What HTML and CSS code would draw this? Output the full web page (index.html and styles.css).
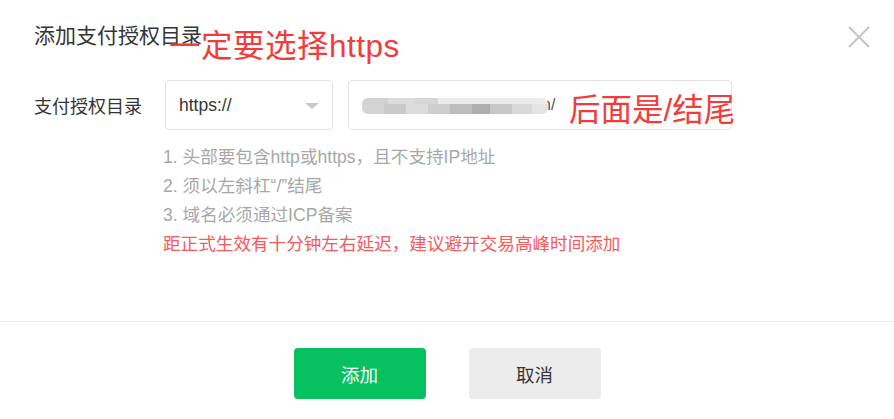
FILE: index.html
```html
<!DOCTYPE html>
<html lang="zh-CN">

<head>
    <meta charset="UTF-8">
    <title>添加支付授权目录</title>
    <link rel="stylesheet" href="styles.css">
</head>

<body>
    <div class="dialog">
        <div class="dialog-head">
            <h3 class="dialog-title">添加支付授权目录</h3>
            <button class="close-btn" aria-label="关闭">
                <svg width="22" height="22" viewBox="0 0 22 22">
                    <path d="M1 1 L21 21 M21 1 L1 21" stroke="#c6c6c6" stroke-width="2.2" fill="none" />
                </svg>
            </button>
        </div>

        <div class="dialog-body">
            <div class="form-row">
                <label class="form-label">支付授权目录</label>
                <div class="select">
                    <span>https://</span>
                    <i class="select-arrow"></i>
                </div>
                <div class="input">
                    <span class="mosaic"></span>
                    <span class="input-tail">n/</span>
                </div>
            </div>

            <ul class="tips">
                <li>1. 头部要包含http或https，且不支持IP地址</li>
                <li>2. 须以左斜杠“/”结尾</li>
                <li>3. 域名必须通过ICP备案</li>
                <li class="warn">距正式生效有十分钟左右延迟，建议避开交易高峰时间添加</li>
            </ul>
        </div>

        <div class="dialog-foot">
            <button class="btn btn-primary">添加</button>
            <button class="btn btn-default">取消</button>
        </div>

        <!-- screenshot annotations -->
        <span class="note note-https">一定要选择https</span>
        <span class="note note-slash">后面是/结尾</span>
    </div>
</body>

</html>
```

FILE: styles.css
```css
body {
    margin: 0;
    background: #fff;
    font-family: "Liberation Sans", "Noto Sans CJK SC", sans-serif;
    color: #353535;
}

.dialog {
    position: relative;
    width: 894px;
    height: 419px;
    background: #fff;
}

.dialog-head {
    display: flex;
    justify-content: space-between;
    align-items: flex-start;
    padding: 22px 24px 0 34px;
    height: 58px;
    box-sizing: border-box;
}

.dialog-title {
    margin: 0;
    font-size: 21px;
    font-weight: normal;
    line-height: 28px;
    color: #353535;
}

.close-btn {
    background: none;
    border: none;
    padding: 0;
    margin-top: 4px;
    width: 22px;
    height: 22px;
    cursor: pointer;
}

.dialog-body {
    padding: 22px 0 0 34px;
    height: 263px;
    box-sizing: border-box;
}

.form-row {
    display: flex;
    align-items: center;
    height: 50px;
}

.form-label {
    width: 131px;
    font-size: 18px;
    color: #353535;
}

.select {
    display: flex;
    align-items: center;
    justify-content: space-between;
    width: 168px;
    height: 50px;
    box-sizing: border-box;
    padding: 0 13px;
    border: 1px solid #e2e2e2;
    border-radius: 4px;
    font-size: 17.5px;
    color: #353535;
}

.select-arrow {
    width: 0;
    height: 0;
    margin-top: 2px;
    border-left: 7px solid transparent;
    border-right: 7px solid transparent;
    border-top: 6px solid #c8c8c8;
}

.input {
    display: flex;
    align-items: center;
    width: 384px;
    height: 50px;
    box-sizing: border-box;
    margin-left: 15px;
    padding: 0 13px;
    border: 1px solid #e2e2e2;
    border-radius: 4px;
    font-size: 16px;
    color: #353535;
}

.mosaic {
    display: block;
    width: 186px;
    height: 16px;
    margin-top: 2px;
    border-radius: 6px;
    background:
        linear-gradient(90deg, #d4d4d4 0 22px, #c9c9c9 22px 44px, #dcdcdc 44px 66px, #cecece 66px 88px, #bdbdbd 88px 110px, #aeaeae 110px 128px, #c8c8c8 128px 150px, #d8d8d8 150px 170px, #e4e4e4 170px 186px) bottom / 100% 10px no-repeat,
        linear-gradient(90deg, #d2d2d2 0 26px, #dcdcdc 26px 52px, #d6d6d6 52px 76px, #ececec 76px 186px) top / 100% 6px no-repeat;
    filter: blur(0.6px);
}

.input-tail {
    margin-left: -6px;
    font-size: 16px;
    color: #555;
}

.tips {
    list-style: none;
    margin: 13px 0 0 129px;
    padding: 0;
    font-size: 17.6px;
    line-height: 29px;
    color: #a8a8a8;
}

.tips .warn {
    color: #f65a5a;
}

.dialog-foot {
    display: flex;
    justify-content: center;
    gap: 43px;
    border-top: 1px solid #ededed;
    padding-top: 26px;
}

.btn {
    width: 132px;
    height: 51px;
    border: none;
    border-radius: 4px;
    font-family: inherit;
    font-size: 18.5px;
    cursor: pointer;
}

.btn-primary {
    background: #07c160;
    color: #fff;
}

.btn-default {
    background: #ececec;
    color: #353535;
}

.note {
    position: absolute;
    font-size: 31.5px;
    line-height: 36px;
    color: #f23c3c;
    white-space: nowrap;
}

.note-https {
    left: 169px;
    top: 28px;
    letter-spacing: 0.5px;
}

.note-slash {
    left: 569px;
    top: 92px;
}
```
